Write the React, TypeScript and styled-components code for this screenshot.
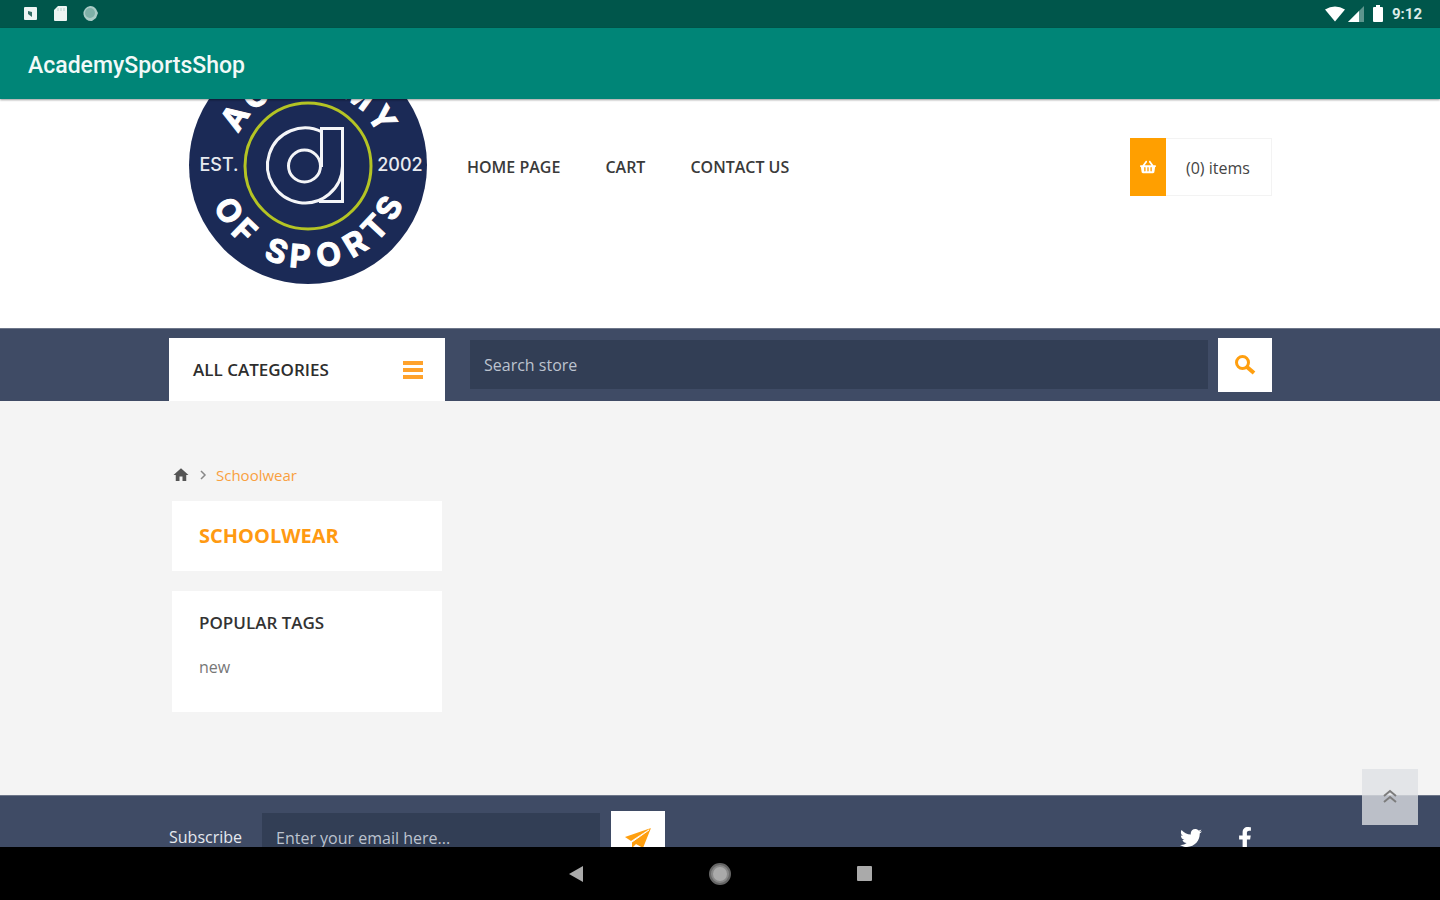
import React from "react";
import styled, { createGlobalStyle } from "styled-components";
import { FaTwitter, FaFacebookF, FaShoppingBasket } from "react-icons/fa";
import { MdHome } from "react-icons/md";

const GlobalStyle = createGlobalStyle`
  *, *::before, *::after { box-sizing: border-box; }
  body { margin: 0; font-family: "Open Sans", "Noto Sans", sans-serif; font-size: 16px; color: #444; }
  h1, h2, ul, ol, p { margin: 0; padding: 0; }
  ul, ol { list-style: none; }
  a { color: inherit; text-decoration: none; }
  button { border: 0; padding: 0; font: inherit; cursor: pointer; }
  svg { display: block; }
`;

const Device = styled.div`
  display: flex;
  flex-direction: column;
  height: 100vh;
  overflow: hidden;
`;

const StatusBar = styled.div`
  display: flex;
  flex: none;
  align-items: center;
  justify-content: space-between;
  height: 28px;
  padding: 0 18px 0 22px;
  background: #00564b;
  color: #fff;
`;

const StatusGroup = styled.div<{ $gap: number }>`
  display: flex;
  align-items: center;
  gap: ${(p) => p.$gap}px;
`;

const Clock = styled.time`
  font: 700 15px/20px Roboto, sans-serif;
  color: #dcebe9;
`;

const AppBar = styled.header`
  position: relative;
  z-index: 1;
  display: flex;
  flex: none;
  align-items: center;
  height: 71px;
  padding: 4px 28px 0;
  background: #008577;
  box-shadow: 0 1px 2px rgba(0, 0, 0, 0.4);
`;

const AppTitle = styled.h1`
  font: 500 23px/32px Roboto, sans-serif;
  color: #f2f9f8;
`;

const WebView = styled.div`
  position: relative;
  flex: 1;
  min-height: 0;
  overflow: hidden;
  background: #f4f4f4;
`;

const Page = styled.div`
  margin-top: -80px;
`;

const Container = styled.div`
  width: 100%;
  max-width: 1136px;
  margin: 0 auto;
  padding: 0 16px 0 17px;
`;

const ShopHeader = styled.header`
  height: 309px;
  background: #fff;
`;

const HeaderRow = styled(Container)`
  display: flex;
  align-items: flex-start;
`;

const LogoLink = styled.a`
  flex: none;
  padding: 26px 18px 0 19px;
`;

const MainNav = styled.nav`
  flex: 1;
  padding: 136px 0 0 21px;

  ul { display: flex; gap: 45px; }
  a { font-weight: 600; line-height: 24px; color: #3a3a3a; text-transform: uppercase; }
`;

const CartButton = styled.a`
  display: flex;
  width: 142px;
  height: 58px;
  margin-top: 119px;
  border: 1px solid #f3f3f3;
  border-left: 0;
`;

const CartIcon = styled.span`
  display: grid;
  place-items: center;
  width: 36px;
  margin: -1px 0;
  background: #ff9f00;
  color: #fff;
`;

const CartCount = styled.span`
  flex: 1;
  padding-left: 20px;
  line-height: 58px;
  color: #444;
`;

const CategoryBar = styled.div`
  background: #3f4b65;
  border-top: 1px solid #6d7689;
`;

const CategoryRow = styled(Container)`
  display: flex;
  align-items: flex-start;
  height: 72px;
  padding-top: 9px;
`;

const Categories = styled.button`
  display: flex;
  flex: none;
  align-items: center;
  justify-content: space-between;
  width: 276px;
  height: 63px;
  padding: 0 22px 0 24px;
  background: #fff;
  color: #2d2d2d;
  font-size: 17px;
  font-weight: 600;
`;

const SearchForm = styled.form`
  display: flex;
  flex: 1;
  gap: 10px;
  margin-left: 25px;
`;

const DarkInput = styled.input`
  flex: 1;
  min-width: 0;
  height: 49px;
  margin-top: 2px;
  padding: 0 14px;
  border: 0;
  border-radius: 0;
  background: #323e55;
  color: #fff;
  font: 16px "Open Sans", sans-serif;

  &::placeholder { color: #bcc3cf; opacity: 1; }
`;

const SquareButton = styled.button`
  display: grid;
  flex: none;
  place-items: center;
  width: 54px;
  height: 54px;
  background: #fff;
  color: #ff9f0f;
`;

const Main = styled.main`
  height: 394px;
  padding-top: 62px;
`;

const Breadcrumb = styled.nav`
  ol { display: flex; align-items: center; gap: 8px; padding-left: 3px; height: 24px; }
  li { display: flex; }
`;

const Crumb = styled.span`
  font-size: 15px;
  line-height: 24px;
  color: #f9a040;
`;

const Sidebar = styled.aside`
  display: flex;
  flex-direction: column;
  gap: 20px;
  width: 270px;
  margin: 14px 0 0 3px;
`;

const Card = styled.section<{ $height: number }>`
  min-height: ${(p) => p.$height}px;
  padding: 20px 27px;
  background: #fff;
`;

const PageTitle = styled.h1`
  font-size: 20px;
  font-weight: 700;
  line-height: 30px;
  color: #ff9a12;
`;

const BlockTitle = styled.h2`
  font-size: 17px;
  font-weight: 600;
  line-height: 24px;
  color: #333;
`;

const Tag = styled.a`
  display: inline-block;
  margin-top: 20px;
  line-height: 24px;
  color: #777;
`;

const ShopFooter = styled.footer`
  height: 120px;
  background: #3f4b65;
  border-top: 1px solid #6d7689;
  color: #fff;
`;

const FooterRow = styled(Container)`
  display: flex;
  justify-content: space-between;
  padding-top: 15px;
`;

const Newsletter = styled.form`
  display: flex;
  width: 496px;
  gap: 11px;

  label { width: 82px; line-height: 52px; color: #e6e9ef; }
`;

const Social = styled.ul`
  display: flex;
  gap: 32px;
  padding: 16px 16px 0 0;

  a { display: grid; place-items: center; width: 22px; height: 22px; }
`;

const BackToTop = styled.button`
  position: absolute;
  right: 22px;
  bottom: 22px;
  display: grid;
  place-items: center;
  width: 56px;
  height: 56px;
  background: rgba(222, 224, 228, 0.78);
  color: #7c7c7c;
`;

const SystemNav = styled.nav`
  display: flex;
  flex: none;
  align-items: center;
  justify-content: center;
  gap: 120px;
  height: 53px;
  background: #000;

  button { display: grid; place-items: center; width: 24px; height: 24px; background: none; }
`;

type Letter = [string, number];

const topLetters: Letter[] = [["A", -57], ["C", -37], ["A", -19], ["D", 0], ["E", 18], ["M", 36], ["Y", 58]];
const bottomLetters: Letter[] = [["O", 60], ["F", 44], ["S", 20], ["P", 5], ["O", -13], ["R", -31], ["T", -47], ["S", -62]];

const Logo = () => (
  <svg width="240" height="240" viewBox="-120 -120 240 240" role="img" aria-label="Academy of Sports">
    <circle r="119" fill="#1b2a56" />
    <circle cy="1" r="63" fill="none" stroke="#b4c424" strokeWidth="3" />
    <g fill="none" stroke="#f4f5f8" strokeWidth="3">
      <path d="M14-33A37.500 37.500 0 1 0 34.500 1" />
      <circle cx="-3.500" cy="1" r="16" />
      <path d="M13.500 2V-36.500H34.500V36.500H11" />
    </g>
    <g
      fill="#fff"
      stroke="#fff"
      strokeWidth="1"
      fontFamily="Inter, sans-serif"
      fontWeight="700"
      fontSize="32"
      textAnchor="middle"
    >
      {topLetters.map(([ch, angle], i) => (
        <text key={i} transform={`rotate(${angle})`} y="-76">{ch}</text>
      ))}
      {bottomLetters.map(([ch, angle], i) => (
        <text key={i} transform={`rotate(${angle})`} y="103">{ch}</text>
      ))}
    </g>
    <g fill="#e8eaf0" fontFamily="Inter, sans-serif" fontWeight="500" fontSize="18" textAnchor="middle">
      <text x="-89" y="6">EST.</text>
      <text x="92" y="6">2002</text>
    </g>
  </svg>
);

const NotificationIcons = () => (
  <StatusGroup $gap={14}>
    <svg width="16" height="16" viewBox="0 0 16 16" aria-hidden="true">
      <rect x="2" y="1" width="13" height="13" rx="1" fill="#eef5f4" />
      <path d="M6 5l4 1v5L6 8z" fill="#356f67" />
    </svg>
    <svg width="16" height="18" viewBox="0 0 16 18" aria-hidden="true">
      <path d="M6 1h8q1 0 1 1v13q0 1-1 1H3q-1 0-1-1V5z" fill="#eef5f4" />
      <path d="M6 3v3M9 3v3M12 3v3" stroke="#b5d0cc" strokeWidth="1" />
    </svg>
    <svg width="18" height="18" viewBox="0 0 18 18" aria-hidden="true">
      <path d="M8 1a7 7 0 0 1 6 3l2 4-2 5-4 3a7 7 0 0 1-2-15z" fill="#a9cbc6" />
      <circle cx="8" cy="8" r="5" fill="#7fb0a8" />
    </svg>
  </StatusGroup>
);

const SystemIcons = () => (
  <StatusGroup $gap={8}>
    <StatusGroup $gap={3}>
      <svg width="20" height="16" viewBox="0 0 20 16" aria-hidden="true">
        <path d="M0 3.500Q10-2.500 20 3.500L10 15.500z" fill="#fff" />
      </svg>
      <svg width="16" height="16" viewBox="0 0 16 16" aria-hidden="true">
        <path d="M16 0v16H0z" fill="#5d958d" />
        <path d="M11 5v11H0z" fill="#fff" />
      </svg>
    </StatusGroup>
    <svg width="12" height="18" viewBox="0 0 12 18" aria-hidden="true">
      <path d="M4 0h4v2h2q1 0 1 1v13q0 1-1 1H2q-1 0-1-1V3q0-1 1-1h2z" fill="#fff" />
    </svg>
    <Clock>9:12</Clock>
  </StatusGroup>
);

export default function App() {
  return (
    <Device>
      <GlobalStyle />
      <StatusBar>
        <NotificationIcons />
        <SystemIcons />
      </StatusBar>
      <AppBar>
        <AppTitle>AcademySportsShop</AppTitle>
      </AppBar>

      <WebView>
        <Page>
          <ShopHeader>
            <HeaderRow>
              <LogoLink href="#home"><Logo /></LogoLink>
              <MainNav aria-label="Main">
                <ul>
                  <li><a href="#home">Home page</a></li>
                  <li><a href="#cart">Cart</a></li>
                  <li><a href="#contact">Contact us</a></li>
                </ul>
              </MainNav>
              <CartButton href="#cart">
                <CartIcon><FaShoppingBasket size={16} /></CartIcon>
                <CartCount>(0) items</CartCount>
              </CartButton>
            </HeaderRow>
          </ShopHeader>

          <CategoryBar>
            <CategoryRow>
              <Categories type="button">
                ALL CATEGORIES
                <svg width="20" height="20" viewBox="0 0 20 20" aria-hidden="true">
                  <path d="M0 3h20M0 10h20M0 17h20" stroke="#ffa22b" strokeWidth="4" />
                </svg>
              </Categories>
              <SearchForm role="search">
                <DarkInput type="text" aria-label="Search store" placeholder="Search store" />
                <SquareButton type="submit" aria-label="Search">
                  <svg width="22" height="22" viewBox="0 0 22 22" fill="none" stroke="currentColor" aria-hidden="true">
                    <circle cx="8.500" cy="8.500" r="6" strokeWidth="3" />
                    <path d="M13 13l7 6" strokeWidth="4" />
                  </svg>
                </SquareButton>
              </SearchForm>
            </CategoryRow>
          </CategoryBar>

          <Main>
            <Container>
              <Breadcrumb aria-label="Breadcrumb">
                <ol>
                  <li><a href="#home" aria-label="Home"><MdHome size={18} color="#555" /></a></li>
                  <li>
                    <svg width="10" height="12" viewBox="0 0 10 12" fill="none" stroke="#888" aria-hidden="true">
                      <path d="M3 2l4 4-4 4" strokeWidth="1.500" />
                    </svg>
                  </li>
                  <li><Crumb aria-current="page">Schoolwear</Crumb></li>
                </ol>
              </Breadcrumb>
              <Sidebar>
                <Card $height={70}><PageTitle>SCHOOLWEAR</PageTitle></Card>
                <Card $height={121}>
                  <BlockTitle>POPULAR TAGS</BlockTitle>
                  <Tag href="#new">new</Tag>
                </Card>
              </Sidebar>
            </Container>
          </Main>

          <ShopFooter>
            <FooterRow>
              <Newsletter>
                <label htmlFor="email">Subscribe</label>
                <DarkInput id="email" type="email" placeholder="Enter your email here..." />
                <SquareButton type="submit" aria-label="Subscribe">
                  <svg width="26" height="22" viewBox="0 0 26 22" fill="currentColor" aria-hidden="true">
                    <path d="M26 1L0 10l6 4z" />
                    <path d="M26 1L7 15v6l4-4 7 4z" />
                    <path d="M24 3L7 15" stroke="#fff" strokeWidth="1" />
                  </svg>
                </SquareButton>
              </Newsletter>
              <Social>
                <li><a href="#twitter" aria-label="Twitter"><FaTwitter size={22} /></a></li>
                <li><a href="#facebook" aria-label="Facebook"><FaFacebookF size={22} /></a></li>
              </Social>
            </FooterRow>
          </ShopFooter>
        </Page>

        <BackToTop type="button" aria-label="Back to top">
          <svg width="14" height="16" viewBox="0 0 14 16" fill="none" stroke="currentColor" strokeWidth="2" aria-hidden="true">
            <path d="M1 7l6-5 6 5M1 13l6-5 6 5" />
          </svg>
        </BackToTop>
      </WebView>

      <SystemNav aria-label="System">
        <button type="button" aria-label="Back">
          <svg width="14" height="16" viewBox="0 0 14 16"><path d="M14 0v16L0 8z" fill="#aaa" /></svg>
        </button>
        <button type="button" aria-label="Home">
          <svg width="24" height="24" viewBox="0 0 24 24">
            <circle cx="12" cy="12" r="10" fill="#888" stroke="#666" strokeWidth="2" />
            <circle cx="12" cy="12" r="7" fill="#aaa" />
          </svg>
        </button>
        <button type="button" aria-label="Recent apps">
          <svg width="15" height="15" viewBox="0 0 15 15"><rect width="15" height="15" rx="1" fill="#aaa" /></svg>
        </button>
      </SystemNav>
    </Device>
  );
}
